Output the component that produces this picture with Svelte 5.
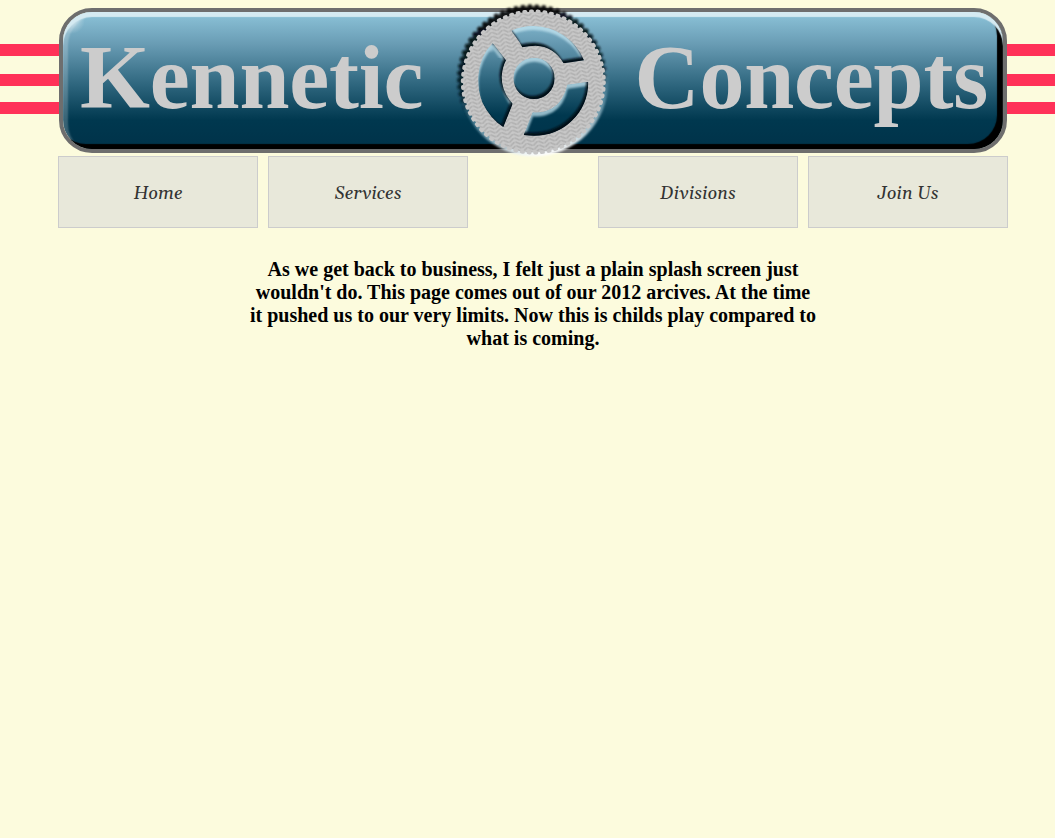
<script>
  const left = ['Home', 'Services'];
  const right = ['Divisions', 'Join Us'];
  const wedges = [
    'M184 92Q215 78 250 78A165 165 0 0 1 402 181L341 190Q311 139 257 137Q237 137 217 142L208 126Z',
    'M128 130L168 181Q157 202 155 230Q155 276 188 311L160 381Q121 357 97 308Q82 270 85 225Q91 166 128 130Z',
    'M415 245Q415 315 364 364Q308 417 221 405L248 337Q278 341 307 325Q341 304 352 254Z',
    'M190 235A62 62 0 1 0 314 235A62 62 0 1 0 190 235Z'
  ];
  const hole = 'M-99 -99H600V600H-99Z';
</script>

<div class="page">
  <header>
    <div class="banner">
      <div class="sheen"></div>
      <span class="word">Kennetic</span>
      <span class="word">Concepts</span>
    </div>
    <svg class="gear" viewBox="0 0 495 486" aria-hidden="true">
      <defs>
        <linearGradient id="water" gradientUnits="userSpaceOnUse" x1="0" y1="48" x2="0" y2="430">
          <stop offset="0" stop-color="#87bdd3" />
          <stop offset=".2" stop-color="#689bb3" />
          <stop offset=".5" stop-color="#2e667e" />
          <stop offset=".78" stop-color="#00384f" />
          <stop offset="1" stop-color="#00334a" />
        </linearGradient>
        <linearGradient id="edge" gradientUnits="userSpaceOnUse" x1="200" y1="20" x2="290" y2="465">
          <stop offset="0" stop-color="#000" stop-opacity=".9" />
          <stop offset=".5" stop-color="#071b25" stop-opacity=".85" />
          <stop offset=".68" stop-color="#071b25" stop-opacity="0" />
        </linearGradient>
        <linearGradient id="glow" gradientUnits="userSpaceOnUse" x1="200" y1="20" x2="290" y2="465">
          <stop offset=".5" stop-color="#6c9db3" stop-opacity="0" />
          <stop offset=".72" stop-color="#7fadc0" stop-opacity=".65" />
          <stop offset="1" stop-color="#fff" />
        </linearGradient>
        <pattern id="tread" width="34" height="12" patternUnits="userSpaceOnUse" patternTransform="rotate(-12)">
          <rect width="34" height="12" fill="#c8c8c8" />
          <path d="M1 -11L16 -1M1 1L16 11M1 13L16 23M18 11L33 1M18 -1L33 -11M18 23L33 13" stroke="#b0b0b0" stroke-width="5" />
        </pattern>
        <filter id="soft" x="-20%" y="-20%" width="140%" height="140%"><feGaussianBlur stdDeviation="3.5" /></filter>
        {#each wedges as d, i}
          <clipPath id="wedge{i}"><path {d} /></clipPath>
        {/each}
      </defs>
      <g filter="url(#soft)">
        <circle cx="246" cy="238" r="219" fill="url(#edge)" />
        <circle cx="246" cy="238" r="220" fill="none" stroke="url(#edge)" stroke-width="10" stroke-dasharray="12 9.3" />
        <circle cx="252" cy="247" r="222" fill="url(#glow)" />
      </g>
      <circle cx="250" cy="246" r="211" fill="url(#tread)" />
      <circle cx="250" cy="246" r="212" fill="none" stroke="#c6c6c6" stroke-width="11" stroke-linecap="round" stroke-dasharray="4 16.2" />
      {#each wedges as d, i}
        <g clip-path="url(#wedge{i})">
          <path {d} fill="url(#water)" />
          <path d={hole + d} fill="#c5e6f2" fill-rule="evenodd" transform="translate(1 12)" filter="url(#soft)" opacity=".75" />
          <path d={hole + d} fill="#000b13" fill-rule="evenodd" transform={i === 1 ? 'translate(-6 -5)' : 'translate(-5 -9)'} filter="url(#soft)" />
        </g>
      {/each}
      <g clip-path="url(#wedge1)">
        <path d="M124 148L132 140L152 168" fill="none" stroke="#a9cfde" stroke-width="14" stroke-linecap="round" opacity=".6" filter="url(#soft)" />
      </g>
    </svg>
  </header>

  <nav>
    {#each left as label}<a href="#top">{label}</a>{/each}
    <span class="gap"></span>
    {#each right as label}<a href="#top">{label}</a>{/each}
  </nav>

  <h3>
    As we get back to business, I felt just a plain splash screen just<br />
    wouldn't do. This page comes out of our 2012 arcives. At the time<br />
    it pushed us to our very limits. Now this is childs play compared to<br />
    what is coming.
  </h3>
</div>

<style>
  :global(body) { background: #fcfbdd; }
  .page { min-height: 838px; overflow: hidden; background: #fcfbdd; font-family: "Liberation Serif", serif; }
  header {
    position: relative;
    height: 156px;
    box-sizing: border-box;
    padding: 8px 48px 0 59px;
    background: linear-gradient(transparent 44px, #ff3158 44px 56px, transparent 56px 74px, #ff3158 74px 86px, transparent 86px 102px, #ff3158 102px 114px, transparent 114px);
  }
  .banner {
    position: relative;
    box-sizing: border-box;
    height: 145px;
    border: 4px solid #6e6e6e;
    border-radius: 33px;
    padding: 0 15px 0 17px;
    display: flex;
    justify-content: space-between;
    background: linear-gradient(#87bdd3 4%, #689bb3 24%, #2e667e 53%, #00384f 79%, #00334a 97%) padding-box;
  }
  .sheen {
    position: absolute;
    inset: 0;
    border-radius: 29px;
    background: radial-gradient(circle at 8px 8px, #ffffff90, transparent 14px);
    box-shadow: inset 0 5px 1px #d5eaf2, inset -6px -5px 1px #000, inset 6px 4px 2px -1px #ffffff38;
  }
  .word { position: relative; font-size: 90px; letter-spacing: -.2px; line-height: 103px; font-weight: bold; color: #ccc; padding-top: 14px; }
  .gear { position: absolute; left: 450px; top: 0; width: 165px; height: 162px; }
  nav { display: flex; gap: 10px; padding-left: 58px; }
  nav a {
    box-sizing: border-box;
    width: 200px;
    height: 72px;
    border: 1px solid #ccc;
    background: #e8e8da;
    color: #333;
    font: italic 18.2px/70px Georgia, Gelasio, "Liberation Serif", serif;
    padding-top: 2px;
    text-align: center;
    text-decoration: none;
  }
  .gap { width: 110px; }
  h3 { margin: 30px 0 0 11px; text-align: center; font-size: 20px; line-height: 23px; color: #000; }
</style>
